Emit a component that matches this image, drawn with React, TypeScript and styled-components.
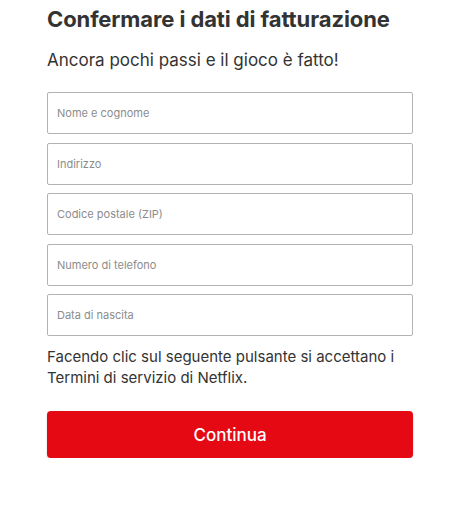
import React from "react";
import styled, { createGlobalStyle } from "styled-components";

const GlobalStyle = createGlobalStyle`
  body {
    margin: 0;
    background: #fff;
    font-family: Inter, "Liberation Sans", Arial, sans-serif;
    color: #333;
  }
`;

const Page = styled.div`
  width: 366px;
  padding: 5px 0 0 47px;
`;

const Title = styled.h1`
  margin: 0;
  font-size: 22px;
  font-weight: 700;
  line-height: 28px;
  color: #333;
  letter-spacing: -0.1px;
`;

const Subtitle = styled.p`
  margin: 15px 0 0;
  font-size: 17px;
  line-height: 24px;
  color: #333;
`;

const Fields = styled.div`
  display: flex;
  flex-direction: column;
  gap: 8.5px;
  margin-top: 20px;
`;

const Field = styled.input`
  box-sizing: border-box;
  width: 100%;
  height: 42px;
  padding: 0 9px;
  border: 1px solid #b3b3b3;
  border-radius: 2px;
  font-family: inherit;
  font-size: 11px;
  color: #333;
  outline: none;
  &::placeholder {
    color: #8c8c8c;
  }
`;

const Terms = styled.p`
  margin: 10px 0 0;
  font-size: 15px;
  line-height: 21px;
  color: #333;
`;

const Submit = styled.button`
  display: block;
  width: 100%;
  height: 47px;
  margin-top: 23px;
  border: none;
  border-radius: 4px;
  background: #e50914;
  color: #fff;
  font-family: inherit;
  font-size: 17px;
  font-weight: 500;
  box-shadow: 0 1px 2px rgba(0, 0, 0, 0.2);
`;

const fields = [
  "Nome e cognome",
  "Indirizzo",
  "Codice postale (ZIP)",
  "Numero di telefono",
  "Data di nascita",
];

export default function App() {
  return (
    <>
      <GlobalStyle />
      <Page>
        <Title>Confermare i dati di fatturazione</Title>
        <Subtitle>Ancora pochi passi e il gioco è fatto!</Subtitle>
        <Fields>
          {fields.map((f) => (
            <Field key={f} placeholder={f} />
          ))}
        </Fields>
        <Terms>
          Facendo clic sul seguente pulsante si accettano i Termini di servizio
          di Netflix.
        </Terms>
        <Submit>Continua</Submit>
      </Page>
    </>
  );
}
